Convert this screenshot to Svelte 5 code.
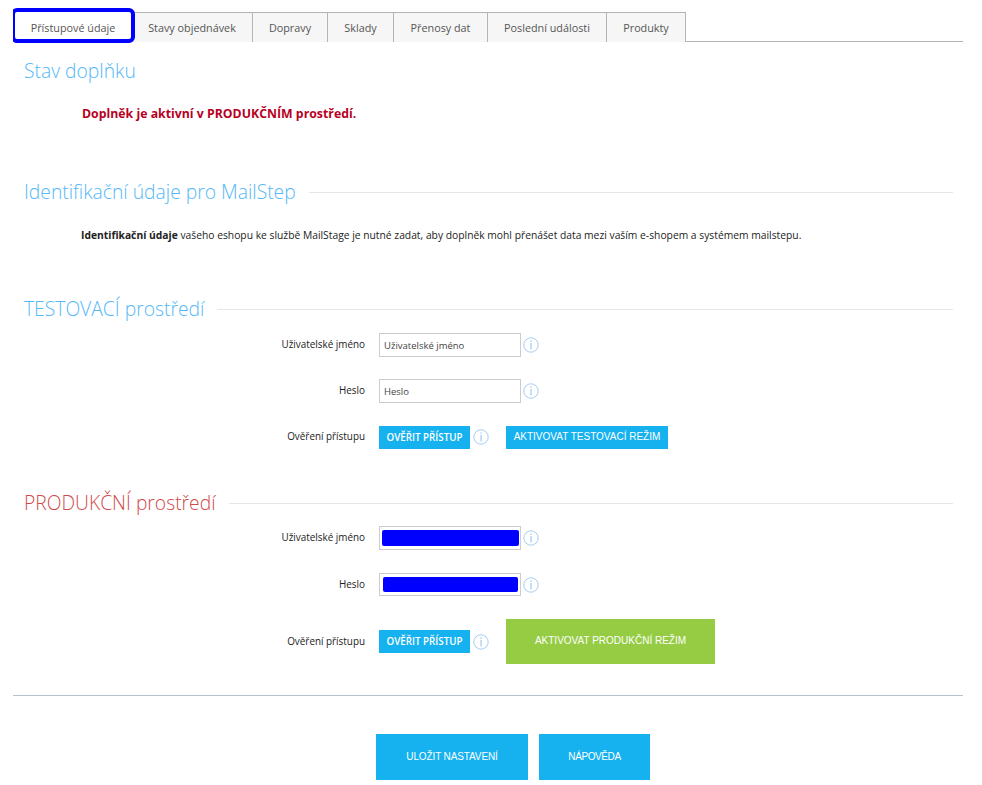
<script>
  const tabs = ["Přístupové údaje", "Stavy objednávek", "Dopravy", "Sklady", "Přenosy dat", "Poslední události", "Produkty"];
  let active = $state(0);
</script>

{#snippet info()}
  <svg class="info" width="16" height="16" viewBox="0 0 16 16" aria-hidden="true">
    <circle cx="8" cy="8" r="7.2" fill="none" stroke="#a5cdf2" stroke-width="1" />
    <rect x="7.4" y="3.4" width="1.3" height="1.5" fill="#a5cdf2" />
    <rect x="7.4" y="6" width="1.3" height="6.4" fill="#a5cdf2" />
  </svg>
{/snippet}

<div class="page">
  <ul class="tabs">
    {#each tabs as tab, i}
      <li class:active={active === i}>
        <button type="button" onclick={() => (active = i)}>{tab}</button>
      </li>
    {/each}
  </ul>

  <section class="status">
    <h2>Stav doplňku</h2>
    <p class="notice">Doplněk je aktivní v PRODUKČNÍM prostředí.</p>
  </section>

  <section class="ident">
    <h2 class="ruled"><span>Identifikační údaje pro MailStep</span></h2>
    <p class="desc"><b>Identifikační údaje</b> vašeho eshopu ke službě MailStage je nutné zadat, aby doplněk mohl přenášet data mezi vaším e-shopem a systémem mailstepu.</p>
  </section>

  <section class="env test">
    <h2 class="ruled"><span>TESTOVACÍ prostředí</span></h2>
    <div class="row">
      <label for="t-user">Uživatelské jméno</label>
      <input id="t-user" type="text" placeholder="Uživatelské jméno" />
      {@render info()}
    </div>
    <div class="row">
      <label for="t-pass">Heslo</label>
      <input id="t-pass" type="text" placeholder="Heslo" />
      {@render info()}
    </div>
    <div class="row verify">
      <span class="label">Ověření přístupu</span>
      <button type="button" class="btn check">OVĚŘIT PŘÍSTUP</button>
      {@render info()}
      <button type="button" class="btn activate">AKTIVOVAT TESTOVACÍ REŽIM</button>
    </div>
  </section>

  <section class="env prod">
    <h2 class="ruled"><span>PRODUKČNÍ prostředí</span></h2>
    <div class="row">
      <span class="label">Uživatelské jméno</span>
      <div class="field"><i class="redacted"></i></div>
      {@render info()}
    </div>
    <div class="row">
      <span class="label">Heslo</span>
      <div class="field second"><i class="redacted"></i></div>
      {@render info()}
    </div>
    <div class="row verify">
      <span class="label">Ověření přístupu</span>
      <button type="button" class="btn check">OVĚŘIT PŘÍSTUP</button>
      {@render info()}
      <button type="button" class="btn activate green">AKTIVOVAT PRODUKČNÍ REŽIM</button>
    </div>
  </section>

  <footer>
    <button type="button" class="btn big save">ULOŽIT NASTAVENÍ</button>
    <button type="button" class="btn big help">NÁPOVĚDA</button>
  </footer>
</div>

<style>
  :global(body) {
    background: #fff;
  }

  .page {
    width: 950px;
    height: 785px;
    margin-left: 13px;
    padding-top: 12px;
    box-sizing: border-box;
    overflow: hidden;
    font-family: "Open Sans", sans-serif;
    font-size: 10px;
    color: #222;
  }

  .tabs {
    display: flex;
    height: 30px;
    margin: 0;
    padding: 0 0 0 2px;
    list-style: none;
    box-sizing: border-box;
    border-bottom: 1px solid #b4b4b4;
  }

  .tabs li {
    height: 30px;
    box-sizing: border-box;
    background: #f6f6f6;
    border-top: 1px solid #b4b4b4;
    border-right: 1px solid #b4b4b4;
  }

  .tabs li.active {
    position: relative;
    z-index: 1;
    height: 27px;
    margin-right: 1px;
    background: #fff;
    border: none;
    outline: 4px solid #00f;
    border-radius: 2px;
  }

  .tabs button {
    height: 100%;
    padding: 0;
    border: none;
    background: none;
    font: inherit;
    font-size: 10.8px;
    color: #555;
    white-space: nowrap;
  }

  .tabs li.active button {
    padding-top: 4px;
  }

  .tabs li:nth-child(1) button { width: 116px; }
  .tabs li:nth-child(2) button { width: 120px; }
  .tabs li:nth-child(3) button { width: 74px; }
  .tabs li:nth-child(4) button { width: 65px; }
  .tabs li:nth-child(5) button { width: 93px; }
  .tabs li:nth-child(6) button { width: 118px; }
  .tabs li:nth-child(7) button { width: 78px; }

  h2 {
    margin: 0;
    height: 28px;
    line-height: 28px;
    font-size: 19.3px;
    font-weight: 300;
    color: #55b8f7;
    white-space: nowrap;
  }

  section {
    padding-left: 11px;
    padding-right: 10px;
  }

  .ruled {
    display: flex;
    align-items: center;
    gap: 13px;
  }

  .ruled::after {
    content: "";
    flex: 1;
    height: 1px;
    background: #e6e6e6;
  }

  .status {
    padding-top: 15px;
  }

  .notice {
    margin: 20px 0 0 58px;
    height: 18px;
    line-height: 18px;
    font-size: 12.3px;
    font-weight: 700;
    color: #b8001f;
  }

  .ident {
    padding-top: 55px;
  }

  .desc {
    margin: 21px 0 0 57px;
    height: 16px;
    line-height: 16px;
    font-size: 10.3px;
    color: #222;
    white-space: nowrap;
  }

  .desc b {
    font-weight: 700;
  }

  .test {
    padding-top: 52px;
  }

  .prod {
    padding-top: 40px;
  }

  .prod h2 {
    color: #cf4a4a;
  }

  .row {
    display: flex;
    align-items: center;
    height: 24px;
    margin-top: 22px;
  }

  .row:nth-child(2) {
    margin-top: 10px;
  }

  .prod .row:nth-child(2) {
    margin-top: 9px;
  }

  .prod .row:nth-child(3) {
    height: 23px;
    margin-top: 23px;
  }

  .verify {
    margin-top: 22px;
  }

  .prod .verify {
    height: 45px;
    margin-top: 23px;
  }

  label,
  .label {
    flex: none;
    width: 341px;
    margin-right: 14px;
    padding-bottom: 2px;
    text-align: right;
    color: #222;
    font-size: 9.9px;
  }

  input,
  .field {
    flex: none;
    width: 142px;
    height: 24px;
    padding: 0 4px;
    box-sizing: border-box;
    border: 1px solid #ccc;
    background: #fff;
    font: inherit;
    font-size: 9.5px;
    color: #444;
  }

  input::placeholder {
    color: #444;
    opacity: 1;
  }

  .field {
    display: flex;
    align-items: center;
    padding: 0 1px 0 2px;
  }

  .field.second {
    height: 23px;
    padding: 0 2.5px 0 3px;
  }

  .redacted {
    flex: 1;
    height: 16.5px;
    background: #00f;
    border-radius: 2px;
  }

  .second .redacted {
    height: 15.5px;
  }

  .info {
    flex: none;
    margin-left: 2px;
  }

  .btn {
    border: none;
    color: #fff;
    background: #16b1ef;
    padding: 0;
    white-space: nowrap;
  }

  .check {
    flex: none;
    width: 91px;
    height: 23px;
    font-family: "Open Sans", sans-serif;
    font-size: 9.8px;
    font-weight: 600;
  }

  .verify .info {
    margin-left: 3px;
  }

  .activate {
    flex: none;
    width: 162px;
    height: 23px;
    margin-left: 17px;
    padding-bottom: 2px;
    font-family: "Liberation Sans", sans-serif;
    font-size: 10px;
  }

  .green {
    width: 209px;
    height: 45px;
    background: #95cc44;
  }

  footer {
    display: flex;
    gap: 11px;
    margin-top: 31px;
    padding: 38px 0 0 363px;
    border-top: 1px solid #b9c1cb;
  }

  .big {
    height: 46px;
    padding-bottom: 2px;
    font-family: "Liberation Sans", sans-serif;
    font-size: 10px;
  }

  .save {
    width: 152px;
    letter-spacing: -0.12px;
  }

  .help {
    width: 111px;
    letter-spacing: -0.4px;
  }
</style>
